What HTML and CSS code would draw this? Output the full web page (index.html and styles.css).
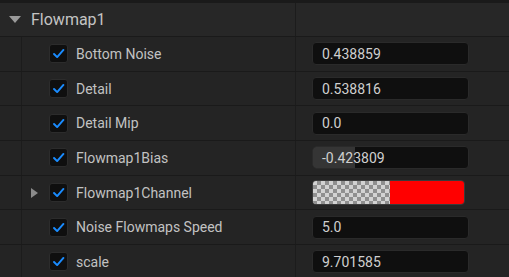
FILE: index.html
```html
<html>

<head>
    <link rel="stylesheet" href="styles.css">
</head>

<body>
    <div class="panel">
        <div class="topstrip"></div>
        <div class="header">
            <div class="title">
                <span class="arrow-down"></span>
                <span>Flowmap1</span>
            </div>
            <div class="blank"></div>
        </div>

        <div class="row">
            <div class="indent"></div>
            <div class="name"><span class="check"><svg viewBox="0 0 19 19"><path d="M4.5 10 L8 13.5 L15 5.5" /></svg></span>Bottom Noise</div>
            <div class="value"><div class="field">0.438859</div></div>
        </div>
        <div class="row">
            <div class="indent"></div>
            <div class="name"><span class="check"><svg viewBox="0 0 19 19"><path d="M4.5 10 L8 13.5 L15 5.5" /></svg></span>Detail</div>
            <div class="value"><div class="field">0.538816</div></div>
        </div>
        <div class="row">
            <div class="indent"></div>
            <div class="name"><span class="check"><svg viewBox="0 0 19 19"><path d="M4.5 10 L8 13.5 L15 5.5" /></svg></span>Detail Mip</div>
            <div class="value"><div class="field">0.0</div></div>
        </div>
        <div class="row">
            <div class="indent"></div>
            <div class="name"><span class="check"><svg viewBox="0 0 19 19"><path d="M4.5 10 L8 13.5 L15 5.5" /></svg></span>Flowmap1Bias</div>
            <div class="value"><div class="field slider"><span class="fill" style="width: 42px"></span><span class="num">-0.423809</span></div></div>
        </div>
        <div class="row">
            <div class="indent"></div>
            <div class="name"><span class="arrow-right"></span><span class="check"><svg viewBox="0 0 19 19"><path d="M4.5 10 L8 13.5 L15 5.5" /></svg></span>Flowmap1Channel</div>
            <div class="value"><div class="colorbar"><span class="alpha"></span><span class="red"></span></div></div>
        </div>
        <div class="row">
            <div class="indent"></div>
            <div class="name"><span class="check"><svg viewBox="0 0 19 19"><path d="M4.5 10 L8 13.5 L15 5.5" /></svg></span>Noise Flowmaps Speed</div>
            <div class="value"><div class="field">5.0</div></div>
        </div>
        <div class="row">
            <div class="indent"></div>
            <div class="name"><span class="check"><svg viewBox="0 0 19 19"><path d="M4.5 10 L8 13.5 L15 5.5" /></svg></span>scale</div>
            <div class="value"><div class="field">9.701585</div></div>
        </div>
    </div>
</body>

</html>
```

FILE: styles.css
```css
body {
    margin: 0;
    background-color: #242424;
    font-family: Roboto, "Liberation Sans", sans-serif;
    overflow: hidden;
}

.panel {
    width: 509px;
    height: 277px;
    background-color: #242424;
}

.topstrip {
    height: 3px;
    background-color: #1a1a1a;
}

.header {
    display: grid;
    grid-template-columns: 296px 1fr;
    height: 33px;
    border-bottom: 1px solid #1a1a1a;
    background-color: #272727;
}

.title {
    display: flex;
    align-items: center;
    color: #c4c4c4;
    font-size: 16px;
    padding-left: 9px;
    border-right: 1px solid #1c1c1c;
}

.arrow-down {
    width: 0;
    height: 0;
    border-left: 6px solid transparent;
    border-right: 6px solid transparent;
    border-top: 7px solid #9a9a9a;
    margin-right: 10px;
}

.row {
    display: grid;
    grid-template-columns: 22px 274px 1fr;
    height: 33.7px;
    border-bottom: 1px solid #1a1a1a;
}

.indent {
    border-right: 1px solid #1c1c1c;
}

.name {
    display: flex;
    align-items: center;
    padding-left: 27px;
    color: #c2c2c2;
    font-size: 14px;
    border-right: 1px solid #1c1c1c;
    position: relative;
}

.arrow-right {
    position: absolute;
    left: 9px;
    width: 0;
    height: 0;
    border-top: 5px solid transparent;
    border-bottom: 5px solid transparent;
    border-left: 7px solid #8a8a8a;
}

.check {
    display: flex;
    width: 19px;
    height: 19px;
    border-radius: 3px;
    background-color: #0f0f0f;
    border: 1px solid #2c2c2c;
    box-sizing: border-box;
    margin-right: 8px;
}

.check svg {
    width: 17px;
    height: 17px;
}

.check path {
    fill: none;
    stroke: #1a8cff;
    stroke-width: 2.2;
    stroke-linecap: round;
    stroke-linejoin: round;
}

.value {
    display: flex;
    align-items: center;
    padding-left: 16px;
}

.field {
    width: 157px;
    height: 23px;
    box-sizing: border-box;
    background-color: #0f0f0f;
    border: 1px solid #2a2a2a;
    border-radius: 4px;
    color: #cfcfcf;
    font-size: 14px;
    display: flex;
    align-items: center;
    padding-left: 9px;
}

.slider {
    position: relative;
    overflow: hidden;
}

.slider .fill {
    position: absolute;
    left: 0;
    top: 0;
    bottom: 0;
    background-color: #353535;
}

.slider .num {
    position: relative;
}

.colorbar {
    display: flex;
    width: 153px;
    height: 25px;
    border-radius: 4px;
    overflow: hidden;
    border: 1px solid #3a3a3a;
    box-sizing: border-box;
}

.alpha {
    width: 77px;
    background-color: #d2d2d2;
    background-image:
        linear-gradient(45deg, #8f8f8f 25%, transparent 25%, transparent 75%, #8f8f8f 75%),
        linear-gradient(45deg, #8f8f8f 25%, transparent 25%, transparent 75%, #8f8f8f 75%);
    background-size: 8px 8px;
    background-position: 0 0, 4px 4px;
}

.red {
    flex: 1;
    background-color: #ff0000;
}
```
